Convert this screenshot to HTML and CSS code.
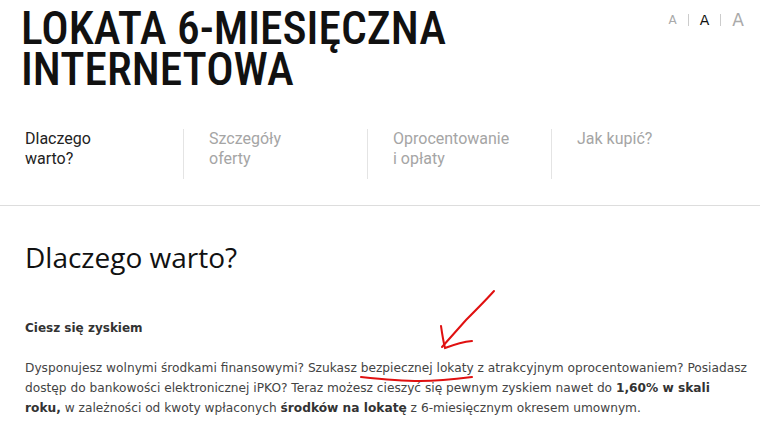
FILE: index.html
```html
<!DOCTYPE html>
<html lang="pl">
<head>
<meta charset="utf-8">
<link rel="stylesheet" href="styles.css">
</head>
<body>
<div class="page">
  <header class="top">
    <h1 class="title">LOKATA 6-MIESIĘCZNA<br>INTERNETOWA</h1>
    <div class="sizes">
      <span class="sz sz1">A</span><span class="sep"></span><span class="sz sz2">A</span><span class="sep"></span><span class="sz sz3">A</span>
    </div>
  </header>
  <nav class="tabs">
    <div class="tab active">Dlaczego<br>warto?</div>
    <div class="tab">Szczegóły<br>oferty</div>
    <div class="tab">Oprocentowanie<br>i opłaty</div>
    <div class="tab">Jak kupić?</div>
  </nav>
  <main class="content">
    <h2 class="heading">Dlaczego warto?</h2>
    <h3 class="sub">Ciesz się zyskiem</h3>
    <p class="text">Dysponujesz wolnymi środkami finansowymi? Szukasz <span class="mark">bezpiecznej lokaty</span> z atrakcyjnym oprocentowaniem? Posiadasz dostęp do bankowości elektronicznej iPKO? Teraz możesz cieszyć się pewnym zyskiem nawet do <b>1,60% w skali roku,</b> w zależności od kwoty wpłaconych <b>środków na lokatę</b> z 6-miesięcznym okresem umownym.</p>
  </main>
  <svg class="arrow" width="773" height="430" viewBox="0 0 773 430">
    <path d="M494 291 C486 300 476 310 466 320 C458 329 450 338 442 347" fill="none" stroke="#e01010" stroke-width="2" stroke-linecap="round"/>
    <path d="M441 326 C442 333 443 340 445 348 C453 345 462 342 472 341" fill="none" stroke="#e01010" stroke-width="2" stroke-linecap="round"/>
    <path d="M361 377 C380 379 400 381 420 381 C440 381 456 379 472 377" fill="none" stroke="#e01010" stroke-width="2" stroke-linecap="round"/>
  </svg>
</div>
</body>
</html>
```
FILE: styles.css
```css
html, body {
  margin: 0;
  padding: 0;
  background: #fff;
}
.page {
  position: relative;
  width: 773px;
  height: 430px;
  overflow: hidden;
}
.top {
  display: flex;
  justify-content: space-between;
  padding: 8px 0 0 21px;
}
.title {
  margin: 0;
  font-family: "Roboto Condensed", "Open Sans", sans-serif;
  font-weight: 500;
  font-size: 45.5px;
  line-height: 41px;
  letter-spacing: 0;
  color: #111;
}
.sizes {
  display: flex;
  align-items: center;
  height: 20px;
  margin-top: 2px;
  padding-right: 29px;
  font-family: "DejaVu Sans", sans-serif;
  color: #aaa;
}
.sz1 { font-size: 12px; }
.sz2 { font-size: 14px; color: #111; }
.sz3 { font-size: 17px; }
.sep {
  width: 1px;
  height: 12px;
  background: #ccc;
  margin: 0 11px;
}
.tabs {
  display: flex;
  margin-top: 39px;
  padding-bottom: 26px;
  border-bottom: 1px solid #ddd;
  width: 760px;
}
.tab {
  width: 184px;
  box-sizing: border-box;
  padding: 0 0 0 25px;
  border-left: 1px solid #e4e4e4;
  font-family: "Roboto", sans-serif;
  font-size: 16px;
  line-height: 20px;
  color: #a5a5a5;
  height: 50px;
}
.tab:first-child {
  border-left: 0;
  width: 183px;
}
.tab.active { color: #222; }
.content {
  padding: 0 25px;
}
.heading {
  margin: 33px 0 0;
  font-family: "Open Sans", sans-serif;
  font-weight: 400;
  font-size: 28px;
  line-height: 36px;
  color: #111;
}
.sub {
  margin: 43px 0 0;
  font-family: "DejaVu Sans", sans-serif;
  font-size: 12px;
  font-weight: bold;
  color: #333;
  line-height: 20px;
}
.text {
  width: 722px;
  margin: 20px 0 0;
  font-family: "DejaVu Sans", sans-serif;
  font-size: 12.2px;
  line-height: 20px;
  color: #444;
}
.text b { color: #333; }
.arrow {
  position: absolute;
  left: 0;
  top: 0;
  pointer-events: none;
}
```
